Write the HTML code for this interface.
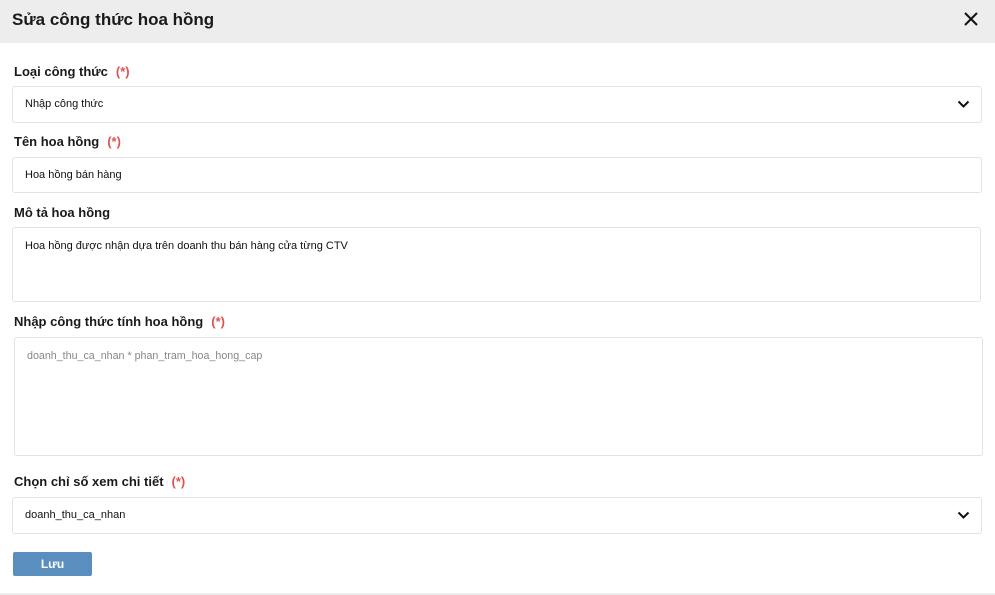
<!DOCTYPE html>
<html><head><meta charset="utf-8"><style>
*{box-sizing:border-box;margin:0;padding:0}
body{width:995px;height:595px;background:#fff;font-family:"Liberation Sans",Arial,sans-serif;color:#111;position:relative;overflow:hidden}
.hdr{position:absolute;left:0;top:0;width:995px;height:43px;background:#ededed}
.hdr h1{position:absolute;left:12px;top:10px;font-size:17px;font-weight:bold;color:#1a1a1a}
.x{position:absolute;right:16px;top:11px}
.lbl{position:absolute;left:14px;font-size:13px;font-weight:bold;color:#1a1a1a}
.lbl span{color:#e0524f;margin-left:8px}
.box{position:absolute;border:1px solid #e3e3e3;border-radius:3px;font-size:11px;color:#111;padding-left:12px}
.chev{position:absolute;right:11px;top:12px}
.btn{position:absolute;left:13px;top:552px;width:79px;height:24px;background:#5a8ebe;border-radius:2px;color:#fff;font-size:12px;font-weight:bold;text-align:center;line-height:24px}
.foot{position:absolute;left:0;top:593px;width:995px;height:2px;background:#ededed}
</style></head><body>
<div class="hdr"><h1>Sửa công thức hoa hồng</h1>
<svg class="x" width="16" height="16" viewBox="0 0 16 16"><path d="M2 2L14 14M14 2L2 14" stroke="#111" stroke-width="2"/></svg></div>
<div class="lbl" style="top:64px">Loại công thức<span>(*)</span></div>
<div class="box" style="left:12px;top:86px;width:970px;height:37px;line-height:35px">Nhập công thức
<svg class="chev" width="13" height="10" viewBox="0 0 13 10"><path d="M1.5 2.5L6.5 7.5L11.5 2.5" stroke="#111" stroke-width="2" fill="none"/></svg></div>
<div class="lbl" style="top:134px">Tên hoa hồng<span>(*)</span></div>
<div class="box" style="left:12px;top:157px;width:970px;height:36px;line-height:34px">Hoa hồng bán hàng</div>
<div class="lbl" style="top:205px">Mô tả hoa hồng</div>
<div class="box" style="left:12px;top:227px;width:969px;height:75px;padding-top:12px">Hoa hồng được nhận dựa trên doanh thu bán hàng cửa từng CTV</div>
<div class="lbl" style="top:314px">Nhập công thức tính hoa hồng<span>(*)</span></div>
<div class="box" style="left:14px;top:337px;width:969px;height:119px;padding-top:12px;color:#888;font-size:10.7px">doanh_thu_ca_nhan * phan_tram_hoa_hong_cap</div>
<div class="lbl" style="top:474px">Chọn chỉ số xem chi tiết<span>(*)</span></div>
<div class="box" style="left:12px;top:497px;width:970px;height:37px;line-height:35px">doanh_thu_ca_nhan
<svg class="chev" width="13" height="10" viewBox="0 0 13 10"><path d="M1.5 2.5L6.5 7.5L11.5 2.5" stroke="#111" stroke-width="2" fill="none"/></svg></div>
<div class="btn">Lưu</div>
<div class="foot"></div>
</body></html>
